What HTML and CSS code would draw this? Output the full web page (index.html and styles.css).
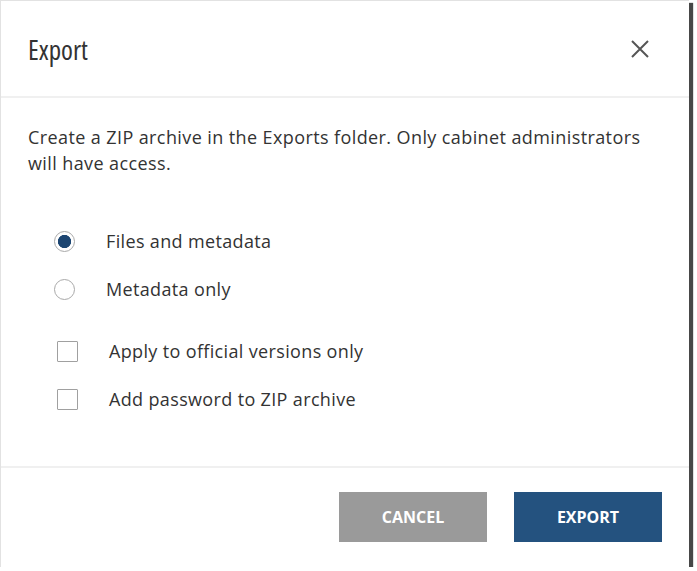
FILE: index.html
```html
<!DOCTYPE html>
<html lang="en">
<head>
    <meta charset="UTF-8">
    <meta name="viewport" content="width=device-width, initial-scale=1.0">
    <title>Export</title>
    <link rel="stylesheet" href="styles.css">
</head>
<body>

    <div class="dialog">
        <div class="dialog-header">
            <h1>Export</h1>
            <button class="close" aria-label="Close">
                <svg width="18" height="18" viewBox="0 0 18 18">
                    <path d="M1 1 L17 17 M17 1 L1 17" stroke="#555" stroke-width="2" fill="none"/>
                </svg>
            </button>
        </div>

        <div class="dialog-body">
            <p class="intro">Create a ZIP archive in the Exports folder. Only cabinet administrators will have access.</p>

            <div class="options">
                <label class="option">
                    <input type="radio" name="scope" checked>
                    <span>Files and metadata</span>
                </label>
                <label class="option">
                    <input type="radio" name="scope">
                    <span>Metadata only</span>
                </label>
            </div>

            <div class="options checks">
                <label class="option">
                    <input type="checkbox">
                    <span>Apply to official versions only</span>
                </label>
                <label class="option">
                    <input type="checkbox">
                    <span>Add password to ZIP archive</span>
                </label>
            </div>
        </div>

        <div class="dialog-footer">
            <button class="btn btn-cancel">Cancel</button>
            <button class="btn btn-export">Export</button>
        </div>
    </div>

</body>
</html>
```

FILE: styles.css
```css
/* Reset */
* {
    margin: 0;
    padding: 0;
    box-sizing: border-box;
}

body {
    font-family: 'Open Sans', 'Noto Sans', sans-serif;
    background: #fff;
    color: #333;
}

/* Dialog frame */
.dialog {
    width: 689px;
    height: 567px;
    background: #fff;
    border-top: 1px solid #e2e2e2;
    border-left: 1px solid #e2e2e2;
    box-shadow: 4px 3px 1px rgba(0, 0, 0, 0.72);
    display: flex;
    flex-direction: column;
}

/* Header */
.dialog-header {
    height: 97px;
    padding: 0 40px 0 27px;
    display: flex;
    align-items: center;
    justify-content: space-between;
    border-bottom: 2px solid #f0f0f0;
}

.dialog-header h1 {
    font-size: 27px;
    font-weight: 400;
    color: #333;
    font-stretch: 75%;
    margin-top: 2px;
}

.close {
    border: none;
    background: none;
    width: 18px;
    height: 18px;
    cursor: pointer;
    margin-top: 1px;
}

.close svg {
    display: block;
}

/* Body */
.dialog-body {
    flex: 1;
    padding: 26px 27px 0;
}

.intro {
    font-size: 18px;
    line-height: 26px;
    font-stretch: 91%;
    letter-spacing: 0.4px;
}

.options {
    margin-top: 41px;
    padding-left: 26px;
}

.options.checks {
    margin-top: 14px;
    padding-left: 29px;
}

.option {
    height: 48px;
    display: flex;
    align-items: center;
    font-size: 18px;
    font-stretch: 91%;
    letter-spacing: 0.35px;
    cursor: pointer;
}

.option input {
    appearance: none;
    -webkit-appearance: none;
    width: 21px;
    height: 21px;
    margin-right: 31px;
    border: 1.5px solid #a9a9a9;
    background: #fff;
    flex-shrink: 0;
}

.option input[type="radio"] {
    border-radius: 50%;
}

.option input[type="radio"]:checked {
    background: radial-gradient(circle, #1d4672 0 6.3px, #fff 6.9px);
}

.option input[type="checkbox"] {
    border-radius: 1px;
    border-color: #a0a0a0;
}

/* Footer */
.dialog-footer {
    border-top: 2px solid #f0f0f0;
    padding: 24px 27px 25px;
    display: flex;
    justify-content: flex-end;
    gap: 27px;
}

.btn {
    width: 148px;
    height: 50px;
    border: none;
    color: #fff;
    font-family: 'Open Sans', 'Noto Sans', sans-serif;
    font-size: 16px;
    font-weight: 700;
    font-stretch: 92%;
    text-transform: uppercase;
    cursor: pointer;
}

.btn-cancel {
    background: #9a9a9a;
}

.btn-export {
    background: #24527f;
}
```
